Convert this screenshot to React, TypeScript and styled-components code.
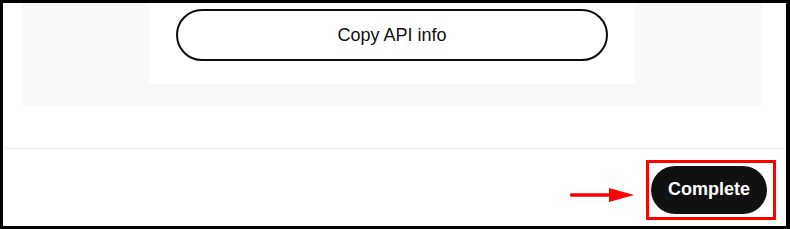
import React from 'react'
import styled, { createGlobalStyle } from 'styled-components'

const GlobalStyle = createGlobalStyle`
    html, body {
        margin: 0;
        padding: 0;
        background: #ffffff;
    }
    * {
        box-sizing: border-box;
    }
`

const Frame = styled.div`
    width: 790px;
    height: 229px;
    border: solid #000;
    border-width: 3px 4px 3px 3px;
    background: #ffffff;
    display: flex;
    flex-direction: column;
    overflow: hidden;
    font-family: 'Liberation Sans', Arial, sans-serif;
`

const Body = styled.div`
    padding: 0 24px 0 19px;
    height: 146px;
    border-bottom: 1px solid #f1f1f1;
`

const Panel = styled.div`
    background: #f9f9f9;
    padding: 0 0 21px 0;
    display: flex;
    justify-content: center;
`

const Card = styled.div`
    width: 486px;
    background: #ffffff;
    padding: 6px 27px 23px 27px;
`

const OutlineButton = styled.button`
    width: 100%;
    height: 52px;
    border: 2px solid #0d0d0d;
    border-radius: 26px;
    background: #ffffff;
    color: #111;
    font-family: inherit;
    font-size: 18px;
    font-weight: 400;
    cursor: pointer;
`

const Footer = styled.div`
    flex: 1;
    display: flex;
    justify-content: flex-end;
    align-items: center;
    padding: 0 10px 0 0;
    gap: 12px;
`

const Arrow = styled.svg`
    display: block;
    margin-top: 14px;
`

const Highlight = styled.div`
    border: 3px solid #ff0000;
    padding: 3px 6px 3px 2px;
    display: flex;
    margin-top: 4px;
`

const SolidButton = styled.button`
    height: 48px;
    width: 116px;
    border: none;
    border-radius: 24px;
    background: #111111;
    color: #ffffff;
    font-family: inherit;
    font-size: 18px;
    font-weight: 700;
    cursor: pointer;
`

export default function App() {
  return (
    <>
      <GlobalStyle />
      <Frame>
        <Body>
          <Panel>
            <Card>
              <OutlineButton>Copy API info</OutlineButton>
            </Card>
          </Panel>
        </Body>
        <Footer>
          <Arrow width="64" height="20" viewBox="0 0 64 20">
            <line x1="1.5" y1="10" x2="42" y2="10" stroke="#ff0000" strokeWidth="3.5" strokeLinecap="round" />
            <polygon points="39,3 64,10 39,17" fill="#ff0000" />
          </Arrow>
          <Highlight>
            <SolidButton>Complete</SolidButton>
          </Highlight>
        </Footer>
      </Frame>
    </>
  )
}
